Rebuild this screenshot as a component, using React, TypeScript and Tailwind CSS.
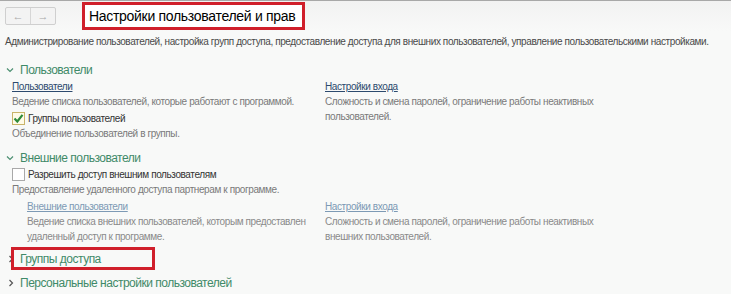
import React from 'react';

function Chevron({ open }: { open: boolean }) {
  return (
    <svg width="8" height="8" viewBox="0 0 8 8" className="shrink-0">
      {open ? (
        <path d="M1 2.5 L4 5.5 L7 2.5" fill="none" stroke="#4a8f70" strokeWidth="1.2" />
      ) : (
        <path d="M2.5 1 L5.5 4 L2.5 7" fill="none" stroke="#555" strokeWidth="1.2" />
      )}
    </svg>
  );
}

function SectionHeader({ title }: { title: string }) {
  return (
    <div className="flex items-center h-[16px] pl-[6px] gap-[6px]">
      <Chevron open />
      <span className="text-[12px] tracking-[-0.5px] text-[#3f8a68] leading-none">{title}</span>
    </div>
  );
}

function Checkbox({ checked }: { checked: boolean }) {
  return (
    <span
      className={`w-[13px] h-[13px] border flex items-center justify-center shrink-0 ${
        checked ? 'border-[#c9b46a] bg-[#fffbe8]' : 'border-[#a9a9a9] bg-white'
      }`}
    >
      {checked && (
        <svg width="11" height="11" viewBox="0 0 11 11">
          <path d="M1.5 5.5 L4.3 8.5 L9.5 1.8" fill="none" stroke="#2e8b3a" strokeWidth="2.2" />
        </svg>
      )}
    </span>
  );
}

export default function App() {
  return (
    <div className="w-[731px] h-[294px] overflow-hidden bg-[#f8f9f8] border-t border-[#a8a8a8] text-[10px] tracking-[-0.4px] font-['Liberation_Sans',Arial,sans-serif]">
      <div className="bg-gradient-to-b from-[#f2f2f2] to-[#f8f9f8] h-[30px] flex items-center">
        <div className="ml-[5px] flex w-[51px] h-[18px] border border-[#cfcfcf] rounded-[2px] bg-[#f3f3f3] tracking-normal">
          <span className="flex-1 flex items-center justify-center text-[#a8a8a8] text-[11px] border-r border-[#d6d6d6]">←</span>
          <span className="flex-1 flex items-center justify-center text-[#a8a8a8] text-[11px]">→</span>
        </div>
        <div className="ml-[26px] h-[28px] w-[223px] border-[3px] border-[#d01f2b] bg-white flex items-center pl-[4px] -mt-[1px] whitespace-nowrap">
          <span className="text-[14px] tracking-[-0.3px] text-black leading-none">Настройки пользователей и прав</span>
        </div>
      </div>

      <div className="pl-[5px] mt-[4px] text-[#4a4a4a] leading-[13px] whitespace-nowrap">
        Администрирование пользователей, настройка групп доступа, предоставление доступа для внешних пользователей, управление пользовательскими настройками.
      </div>

      <div className="mt-[14px]">
        <SectionHeader title="Пользователи" />
        <div className="grid grid-cols-[313px_1fr] pl-[12px] mt-[1px] leading-[15px]">
          <div>
            <div className="text-[#2c4a6e] underline">Пользователи</div>
            <div className="text-[#7a7a7a] whitespace-nowrap">Ведение списка пользователей, которые работают с программой.</div>
            <div className="flex items-center gap-[3px] mt-[1px] h-[16px]">
              <Checkbox checked />
              <span className="text-[#333]">Группы пользователей</span>
            </div>
            <div className="text-[#7a7a7a]">Объединение пользователей в группы.</div>
          </div>
          <div>
            <div className="text-[#2c4a6e] underline">Настройки входа</div>
            <div className="text-[#7a7a7a] w-[290px]">Сложность и смена паролей, ограничение работы неактивных пользователей.</div>
          </div>
        </div>
      </div>

      <div className="mt-[9px]">
        <SectionHeader title="Внешние пользователи" />
        <div className="pl-[12px] leading-[15px]">
          <div className="flex items-center gap-[3px] h-[16px]">
            <Checkbox checked={false} />
            <span className="text-[#333]">Разрешить доступ внешним пользователям</span>
          </div>
          <div className="text-[#7a7a7a]">Предоставление удаленного доступа партнерам к программе.</div>
        </div>
        <div className="grid grid-cols-[298px_1fr] pl-[27px] mt-[2px] leading-[15px]">
          <div>
            <div className="text-[#7d9ab5] underline">Внешние пользователи</div>
            <div className="text-[#8a8a8a] w-[285px]">Ведение списка внешних пользователей, которым предоставлен удаленный доступ к программе.</div>
          </div>
          <div>
            <div className="text-[#7d9ab5] underline">Настройки входа</div>
            <div className="text-[#8a8a8a] w-[290px]">Сложность и смена паролей, ограничение работы неактивных внешних пользователей.</div>
          </div>
        </div>
      </div>

      <div className="mt-[3px] flex flex-col gap-[5px]">
        <div className="flex items-center h-[23px] pl-[7px]">
          <Chevron open={false} />
          <div className="ml-[-4px] h-[23px] w-[144px] border-[3px] border-[#d01f2b] flex items-center pl-[6px]">
            <span className="text-[12px] tracking-[-0.5px] text-[#3f8a68] leading-none">Группы доступа</span>
          </div>
        </div>
        <div className="flex items-center h-[16px] pl-[7px] gap-[5px]">
          <Chevron open={false} />
          <span className="text-[12px] tracking-[-0.5px] text-[#3f8a68] leading-none">Персональные настройки пользователей</span>
        </div>
      </div>
    </div>
  );
}
